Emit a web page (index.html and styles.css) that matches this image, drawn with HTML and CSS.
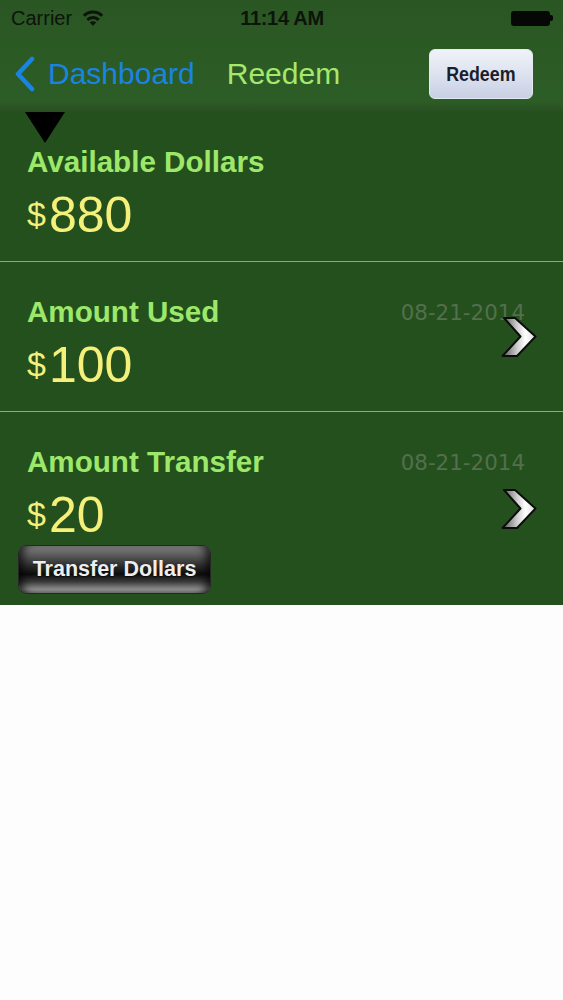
FILE: index.html
```html
<!DOCTYPE html>
<html>
<head>
<meta charset="utf-8">
<link rel="stylesheet" href="styles.css">
</head>
<body>
<div class="top">
  <div class="status">
    <div class="st-left">
      <span class="carrier">Carrier</span>
      <svg class="wifi" width="20" height="17" viewBox="0 0 20 17">
        <path d="M0.81 6.81 A13 13 0 0 1 19.19 6.81" fill="none" stroke="#0d140b" stroke-width="3"/>
        <path d="M4.34 10.84 A8 8 0 0 1 15.66 10.84" fill="none" stroke="#0d140b" stroke-width="3"/>
        <path d="M10 16.8 L6.82 13.6 A4.5 4.5 0 0 1 13.18 13.6 Z" fill="#0d140b"/>
      </svg>
    </div>
    <div class="time">11:14 AM</div>
    <div class="st-right">
      <span class="bat-body"></span><span class="bat-nub"></span>
    </div>
  </div>
  <div class="nav">
    <svg class="back" width="22" height="36" viewBox="0 0 22 36">
      <polyline points="18,3 4,18 18,33" fill="none" stroke="#1a84e2" stroke-width="4.5" stroke-linecap="round" stroke-linejoin="round"/>
    </svg>
    <span class="back-label">Dashboard</span>
    <span class="nav-title">Reedem</span>
    <span class="spacer"></span>
    <button class="redeem-btn"><span class="redeem-text">Redeem</span></button>
  </div>
</div>

<div class="list">
  <div class="row">
    <span class="pointer"></span>
    <div class="row-head">
      <span class="label">Available Dollars</span>
    </div>
    <div class="amount"><span class="cur">$</span>880</div>
  </div>
  <div class="row">
    <div class="row-head">
      <span class="label">Amount Used</span>
      <span class="date">08-21-2014</span>
    </div>
    <div class="amount"><span class="cur">$</span>100</div>
    <svg class="chev" width="36" height="41" viewBox="0 0 36 41">
      <defs>
        <linearGradient id="cg1" x1="0" y1="0" x2="1" y2="0">
          <stop offset="0" stop-color="#555"/>
          <stop offset="0.45" stop-color="#cfcfcf"/>
          <stop offset="0.7" stop-color="#ffffff"/>
          <stop offset="1" stop-color="#d8d8d8"/>
        </linearGradient>
      </defs>
      <polygon points="3,1.5 14,1.5 34.5,20 16,39.5 1.5,39.5 19.5,20" fill="url(#cg1)" stroke="#0c0c0c" stroke-width="2" stroke-linejoin="round"/>
    </svg>
  </div>
  <div class="row row-last">
    <div class="row-head">
      <span class="label">Amount Transfer</span>
      <span class="date">08-21-2014</span>
    </div>
    <div class="amount"><span class="cur">$</span>20</div>
    <button class="transfer-btn">Transfer Dollars</button>
    <svg class="chev" width="36" height="41" viewBox="0 0 36 41">
      <defs>
        <linearGradient id="cg2" x1="0" y1="0" x2="1" y2="0">
          <stop offset="0" stop-color="#555"/>
          <stop offset="0.45" stop-color="#cfcfcf"/>
          <stop offset="0.7" stop-color="#ffffff"/>
          <stop offset="1" stop-color="#d8d8d8"/>
        </linearGradient>
      </defs>
      <polygon points="3,1.5 14,1.5 34.5,20 16,39.5 1.5,39.5 19.5,20" fill="url(#cg2)" stroke="#0c0c0c" stroke-width="2" stroke-linejoin="round"/>
    </svg>
  </div>
</div>
</body>
</html>
```

FILE: styles.css
```css
* { box-sizing: border-box; }
html, body {
  margin: 0;
  padding: 0;
  background: #fdfdfd;
  font-family: "Liberation Sans", Arial, sans-serif;
}
.top {
  background: linear-gradient(#2a5623 0%, #2d5d26 88%, #29552 3);
  background: linear-gradient(#2a5623 0%, #2d5d26 90%, #284f21 100%);
  height: 112px;
}
.status {
  height: 36px;
  display: grid;
  grid-template-columns: 1fr auto 1fr;
  align-items: center;
  padding: 0 10px 0 11px;
  color: #0d140b;
}
.st-left {
  display: flex;
  align-items: center;
  gap: 11px;
}
.carrier {
  font-size: 20px;
}
.wifi { margin-top: -1px; }
.time {
  font-size: 20px;
  font-weight: bold;
  letter-spacing: -0.3px;
}
.st-right {
  display: flex;
  justify-content: flex-end;
  align-items: center;
}
.bat-body {
  width: 39px;
  height: 15px;
  background: #050805;
  border-radius: 3px;
}
.bat-nub {
  width: 3px;
  height: 6px;
  background: #050805;
  border-radius: 0 2px 2px 0;
}
.nav {
  height: 76px;
  display: flex;
  align-items: center;
  padding: 0 30px 0 14px;
}
.back { margin-right: 12px; }
.back-label {
  font-size: 30px;
  color: #1a84e2;
}
.nav-title {
  font-size: 30px;
  color: #a6e86c;
  margin-left: 32px;
}
.spacer { flex: 1; }
.redeem-btn {
  width: 104px;
  height: 50px;
  border-radius: 6px;
  border: 1px solid #e3e8f2;
  background: linear-gradient(#f0f2f8 0%, #dfe4f0 45%, #c8d0e4 100%);
  display: flex;
  align-items: center;
  justify-content: center;
  padding: 0;
}
.redeem-text {
  display: inline-block;
  font-family: "Liberation Sans", Arial, sans-serif;
  font-weight: bold;
  font-size: 21px;
  color: #1b1e2b;
  transform: scaleX(0.85);
}
.list {
  background: #24501e;
}
.row {
  position: relative;
  padding: 33px 38px 18px 27px;
  height: 150px;
  border-bottom: 1px solid #90a58a;
}
.row-last {
  height: 193px;
  border-bottom: none;
  padding-bottom: 11px;
}
.pointer {
  position: absolute;
  left: 25px;
  top: 0;
  width: 0;
  height: 0;
  border-left: 20px solid transparent;
  border-right: 20px solid transparent;
  border-top: 31px solid #000;
}
.row-head {
  display: flex;
  justify-content: space-between;
  align-items: center;
  height: 34px;
}
.label {
  font-size: 29.6px;
  font-weight: bold;
  line-height: 34px;
  color: #9de86a;
}
.date {
  font-family: "DejaVu Sans", Verdana, sans-serif;
  font-size: 21.4px;
  line-height: 25px;
  color: #536f4d;
}
.amount {
  margin-top: 8px;
  font-size: 50px;
  line-height: 56px;
  height: 56px;
  color: #f4f07a;
}
.cur {
  font-size: 34px;
  line-height: 1;
  vertical-align: 6px;
  margin-right: 3px;
}
.chev {
  position: absolute;
  right: 26px;
  top: 50%;
  transform: translateY(-50%);
}
.transfer-btn {
  display: block;
  margin: 2px 0 0 -9px;
  width: 193px;
  height: 49px;
  border-radius: 9px;
  border: 1px solid #262626;
  background: linear-gradient(#808080 0%, #5e5e5e 18%, #2c2c2c 42%, #0c0c0c 60%, #3a3a3a 76%, #8e8e8e 92%, #7c7c7c 100%);
  box-shadow: inset 9px 0 8px -5px rgba(0,0,0,0.7), inset -9px 0 8px -5px rgba(0,0,0,0.7);
  color: #eeeeee;
  font-family: "Liberation Sans", Arial, sans-serif;
  font-weight: bold;
  font-size: 21.5px;
  padding: 0;
  text-shadow: 0 1px 1px rgba(0,0,0,0.6);
}
```
